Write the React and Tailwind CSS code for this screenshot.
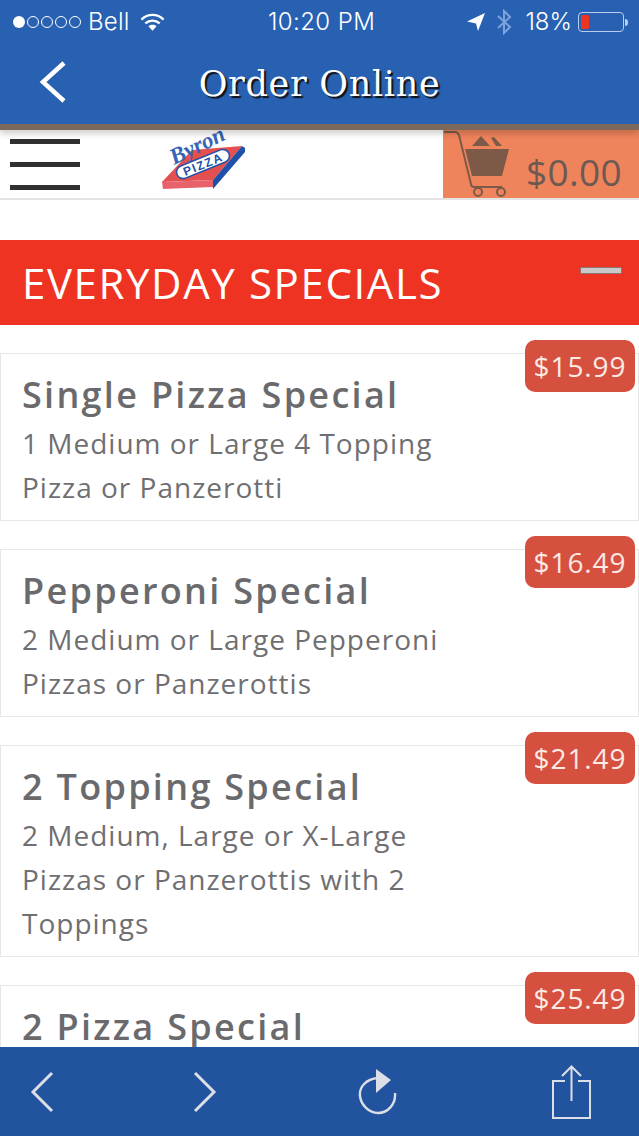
const specials = [
  { name: "Single Pizza Special", price: "$15.99", lines: ["1 Medium or Large 4 Topping", "Pizza or Panzerotti"] },
  { name: "Pepperoni Special", price: "$16.49", lines: ["2 Medium or Large Pepperoni", "Pizzas or Panzerottis"] },
  { name: "2 Topping Special", price: "$21.49", lines: ["2 Medium, Large or X-Large", "Pizzas or Panzerottis with 2", "Toppings"] },
  { name: "2 Pizza Special", price: "$25.49", lines: [] },
];

function Wifi() {
  return (
    <svg width="25" height="20" viewBox="0 0 26 20" fill="none" stroke="#fff" strokeWidth="2.4">
      <path d="M1.5 7.5C8 1 18 1 24.5 7.5" />
      <path d="M5.5 11.5C10 7.5 16 7.5 20.5 11.5" />
      <path d="M13 19l-4.2-4.6c2.5-2 5.9-2 8.4 0z" fill="#fff" stroke="none" />
    </svg>
  );
}

function StatusBar() {
  return (
    <div className="flex h-[42px] items-center pl-[13px] pr-[11px] pt-[2px] font-['Inter',sans-serif] text-[24px] font-light text-white">
      <div className="flex w-[255px] items-center">
        <div className="flex items-center gap-[2px]">
          <span className="h-[12px] w-[12px] rounded-full bg-white" />
          {[0, 1, 2, 3].map((i) => (
            <span key={i} className="h-[12px] w-[12px] rounded-full border border-white" />
          ))}
        </div>
        <span className="ml-[7px] tracking-[0.2px]">Bell</span>
        <span className="ml-[10px] flex"><Wifi /></span>
      </div>
      <span className="w-[115px] whitespace-nowrap tracking-[0.4px]">10:20 PM</span>
      <div className="ml-auto flex items-center">
        <svg width="18" height="18" viewBox="0 0 18 18" fill="#fff"><path d="M0 8.5 18 0l-7 18-2-7.5z" /></svg>
        <svg className="ml-[11px]" width="16" height="26" viewBox="0 0 16 26" fill="none" stroke="#7ea3dc" strokeWidth="2">
          <path d="M2 7l12 11-6 6V2l6 6L2 19" />
        </svg>
        <span className="ml-[13px]">18%</span>
        <div className="ml-[6px] flex h-[20px] w-[46px] rounded-[4px] border border-[#b9cdec] p-[2px]">
          <span className="h-full w-[8px] rounded-[1px] bg-[#ee3524]" />
        </div>
        <span className="ml-[1px] h-[7px] w-[3px] rounded-r-full bg-[#b9cdec]" />
      </div>
    </div>
  );
}

function Logo() {
  return (
    <svg className="overflow-visible" width="86" height="58" viewBox="0 0 86 58">
      <path d="M2 49 32 17l50-4-29 34z" fill="#e4504f" />
      <path d="M82 13l3 2v4L53 56v-9z" fill="#2150a8" />
      <path d="M2 49l51-2v7l-50 2z" fill="#e8626b" />
      <g transform="rotate(-22 43 31)">
        <rect x="15" y="24.5" width="56" height="13" rx="6.5" fill="#fff" stroke="#2150a8" strokeWidth="1.5" />
        <text x="43" y="35.5" textAnchor="middle" fontFamily="'Liberation Sans', sans-serif" fontWeight="700" fontSize="12" letterSpacing="1.5" fill="#2150a8">PIZZA</text>
      </g>
      <text x="14" y="32" transform="rotate(-26 14 32)" fontFamily="'Liberation Serif', serif" fontStyle="italic" fontWeight="700" fontSize="23" fill="#3565b4">Byron</text>
    </svg>
  );
}

function Cart() {
  return (
    <svg width="68" height="69" viewBox="0 0 68 69" fill="none" stroke="#7d5a47" strokeWidth="2">
      <path d="M1 3h11c2 0 3 1 4 3l12 49c0 2 1 3 3 3h28" />
      <path d="M22 20h44l-7 27H29z" fill="#7d5a47" stroke="none" />
      <path d="M29 17l9-10 9 10zM48 9l3-1 8 9h-6z" fill="#7d5a47" stroke="none" />
      <circle cx="35" cy="63" r="4" />
      <circle cx="58" cy="63" r="4" />
    </svg>
  );
}

function SpecialCard({ name, price, lines }) {
  return (
    <div className="relative mt-[28px] border border-[#e6e7e9] bg-white pb-[11px] pl-[21px] pt-[17px] first:mt-0">
      <div className="mb-[2px] text-[36px] font-semibold leading-[48px] tracking-[2.3px] text-[#6a6a6d]">{name}</div>
      {lines.map((line) => (
        <div key={line} className="text-[28px] leading-[44px] tracking-[1px] text-[#6f6f72]">{line}</div>
      ))}
      <span className="absolute right-[3px] top-[-14px] flex h-[52px] w-[110px] items-center justify-center rounded-[10px] bg-[#d5503f] text-[28px] tracking-[0.9px] text-[#fbe9e4]">
        {price}
      </span>
    </div>
  );
}

export default function App() {
  return (
    <div className="flex h-[1136px] w-[639px] flex-col overflow-hidden bg-white font-['Open_Sans',sans-serif]">
      <header className="z-10 flex h-[130px] shrink-0 flex-col border-b-[6px] border-[#7b6a5b] bg-[#2961b2] shadow-[0_4px_6px_rgba(0,0,0,0.18)]">
        <StatusBar />
        <div className="relative flex flex-1 items-center justify-center pt-[3px]">
          <svg className="absolute left-[39px] top-[19px]" width="28" height="42" viewBox="0 0 28 42" fill="none" stroke="#fff" strokeWidth="4.5">
            <path d="M25 2 4 21l21 19" />
          </svg>
          <h1 className="font-['DejaVu_Serif',serif] text-[35px] tracking-[0.7px] text-white [text-shadow:2px_2px_1px_#111]">Order Online</h1>
        </div>
      </header>

      <div className="flex h-[70px] shrink-0 items-stretch justify-between border-b-2 border-[#e4e4e6]">
        <div className="flex items-center">
          <div className="ml-[10px] flex w-[70px] flex-col gap-[18px]">
            <span className="h-[5px] bg-[#303033]" />
            <span className="h-[5px] bg-[#303033]" />
            <span className="h-[5px] bg-[#303033]" />
          </div>
          <div className="mb-[4px] ml-[80px] flex"><Logo /></div>
        </div>
        <div className="flex w-[196px] items-end bg-[#ef845c]">
          <Cart />
          <span className="mb-[4px] ml-[15px] text-[37px] leading-[44px] tracking-[0.3px] text-[#6c5a52]">$0.00</span>
        </div>
      </div>

      <section className="mt-[40px] flex h-[85px] shrink-0 items-center justify-between bg-[#ee3322] pl-[22px] pr-[17px]">
        <h2 className="text-[42px] tracking-[1.6px] text-white">EVERYDAY SPECIALS</h2>
        <span className="mb-[24px] h-[7px] w-[42px] rounded-[1px] border border-[#8e7470] bg-[#c9c9c9]" />
      </section>

      <main className="min-h-0 flex-1 overflow-hidden pt-[28px]">
        {specials.map((item) => (
          <SpecialCard key={item.name} {...item} />
        ))}
      </main>

      <footer className="flex h-[89px] shrink-0 items-center bg-[#22539f] text-[#dbdfe6]">
        <svg className="ml-[30px]" width="24" height="42" viewBox="0 0 24 42" fill="none" stroke="currentColor" strokeWidth="3">
          <path d="M22 2 3 21l19 19" />
        </svg>
        <svg className="ml-[139px]" width="24" height="42" viewBox="0 0 24 42" fill="none" stroke="currentColor" strokeWidth="3">
          <path d="M2 2l19 19L2 40" />
        </svg>
        <svg className="ml-[141px]" width="40" height="46" viewBox="0 0 40 46" fill="none">
          <path d="M20 9C8 10 1 18 2 27c1 9 9 17 18 17 10 0 18-9 17-20" stroke="currentColor" strokeWidth="2.4" />
          <path d="M18 0l15 11-15 13z" fill="currentColor" />
        </svg>
        <svg className="ml-[154px]" width="40" height="54" viewBox="0 0 40 54" fill="none" stroke="currentColor" strokeWidth="2">
          <path d="M13 16H1v37h37V16H26" />
          <path d="M19.5 36V2M10 11l9.5-9.5L29 11" />
        </svg>
      </footer>
    </div>
  );
}
